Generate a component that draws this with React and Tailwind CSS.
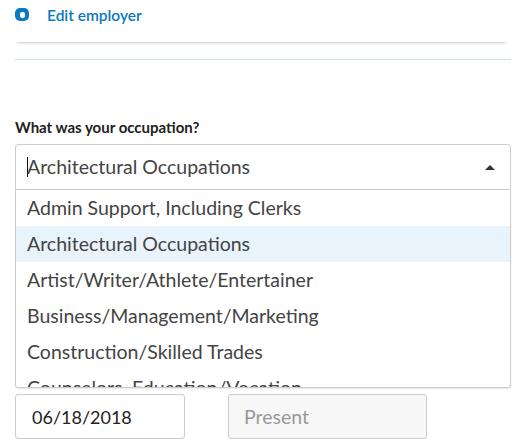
import React from 'react';

const OCCUPATIONS = [
  'Admin Support, Including Clerks',
  'Architectural Occupations',
  'Artist/Writer/Athlete/Entertainer',
  'Business/Management/Marketing',
  'Construction/Skilled Trades',
  'Counselors, Education/Vocation',
];

const App = () => {
  const selected = 'Architectural Occupations';

  return (
    <div className="w-[526px] h-[444px] overflow-hidden bg-white font-['Lato',sans-serif] text-[#333]">
      <div className="pl-[15px] pr-[15px]">
        {/* Employer card (bottom edge visible) */}
        <div className="w-[493px] h-[42px] flex items-start pt-[8px] shadow-[0_3px_3px_-2px_rgba(0,0,0,0.22)]">
          <span className="w-[14px] h-[13px] rounded-[5px] bg-[#0b78c2] flex items-center justify-center">
            <span className="w-[5px] h-[6px] rounded-[2px] bg-white" />
          </span>
          <span className="ml-[18px] -mt-[4px] text-[15.5px] font-semibold text-[#0b78c2]">Edit employer</span>
        </div>

        <div className="w-[496px] mt-[17px] border-b border-[#cde2ec]" />

        {/* Occupation */}
        <label className="block mt-[59px] text-[15px] leading-[16px] font-bold text-[#222]">
          What was your occupation?
        </label>

        <div className="relative w-[496px] mt-[9px]">
          <div className="h-[46px] border border-[#ccc] rounded-t-[3px] flex items-center pl-[11px] pr-[15px]">
            <span className="w-px h-[20px] bg-[#111] -mr-px" />
            <span className="text-[19.5px] text-[#444]">{selected}</span>
            <span className="ml-auto w-0 h-0 border-l-[5px] border-r-[5px] border-b-[5px] border-l-transparent border-r-transparent border-b-[#333]" />
          </div>

          {/* Dropdown menu */}
          <div className="absolute left-0 right-0 top-[45px] h-[199px] overflow-hidden bg-white border border-[#ccc] rounded-b-[3px] shadow-[0_1px_2px_rgba(0,0,0,0.1)]">
            {OCCUPATIONS.map((o) => (
              <div
                key={o}
                className={`h-[36px] flex items-center pl-[11px] text-[19.5px] text-[#444] ${o === selected ? 'bg-[#e8f3fc]' : ''}`}
              >
                {o}
              </div>
            ))}
          </div>
        </div>

        {/* Dates */}
        <div className="flex gap-[43px] mt-[204px]">
          <input
            readOnly
            value="06/18/2018"
            className="w-[170px] h-[45px] border border-[#ccc] rounded-[3px] px-[16px] text-[18px] text-[#222] bg-white outline-none"
          />
          <input
            readOnly
            placeholder="Present"
            className="w-[199px] h-[45px] border border-[#ccc] rounded-[3px] px-[15px] text-[19.5px] bg-[#f7f7f7] placeholder-[#999] outline-none"
          />
        </div>
      </div>
    </div>
  );
};

export default App;
